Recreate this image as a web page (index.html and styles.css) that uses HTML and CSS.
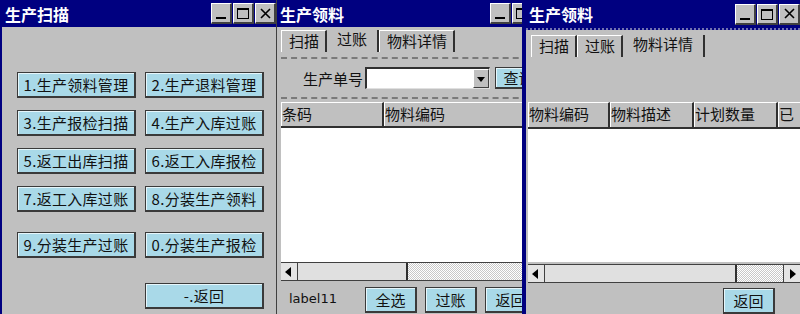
FILE: index.html
```html
<!DOCTYPE html>
<html lang="zh-CN">
<head>
    <meta charset="UTF-8">
    <title>生产扫描</title>
    <link rel="stylesheet" href="styles.css">
</head>
<body>
<div class="desktop">

    <!-- window 1: main menu -->
    <div class="window win-scan">
        <div class="frame">
            <div class="titlebar">
                <span class="title">生产扫描</span>
                <div class="caption-btns">
                    <span class="cbtn"><i class="ico-min"></i></span>
                    <span class="cbtn"><i class="ico-max"></i></span>
                    <span class="cbtn"><svg class="ico-close" width="11" height="11" viewBox="0 0 11 11"><path d="M1 1L10 10M10 1L1 10" stroke="#000" stroke-width="1.6"/></svg></span>
                </div>
            </div>
            <div class="menu-body">
                <div class="menu-row">
                    <button class="btn menu-btn">1.生产领料管理</button>
                    <button class="btn menu-btn">2.生产退料管理</button>
                </div>
                <div class="menu-row">
                    <button class="btn menu-btn">3.生产报检扫描</button>
                    <button class="btn menu-btn">4.生产入库过账</button>
                </div>
                <div class="menu-row">
                    <button class="btn menu-btn">5.返工出库扫描</button>
                    <button class="btn menu-btn">6.返工入库报检</button>
                </div>
                <div class="menu-row">
                    <button class="btn menu-btn">7.返工入库过账</button>
                    <button class="btn menu-btn">8.分装生产领料</button>
                </div>
                <div class="menu-row row-last">
                    <button class="btn menu-btn">9.分装生产过账</button>
                    <button class="btn menu-btn">0.分装生产报检</button>
                </div>
                <div class="menu-row row-back">
                    <button class="btn menu-btn">-.返回</button>
                </div>
            </div>
        </div>
    </div>

    <!-- window 2: posting tab -->
    <div class="window win-pick">
        <div class="frame">
            <div class="titlebar">
                <span class="title">生产领料</span>
                <div class="caption-btns">
                    <span class="cbtn"><i class="ico-min"></i></span>
                    <span class="cbtn"><i class="ico-max"></i></span>
                    <span class="cbtn"><svg class="ico-close" width="11" height="11" viewBox="0 0 11 11"><path d="M1 1L10 10M10 1L1 10" stroke="#000" stroke-width="1.6"/></svg></span>
                </div>
            </div>
            <div class="tabs">
                <span class="tab">扫描</span>
                <span class="tab active">过账</span>
                <span class="tab">物料详情</span>
            </div>
            <div class="query-panel">
                <label class="field-label">生产单号</label>
                <div class="combo">
                    <span class="combo-text"></span>
                    <span class="combo-arrow"></span>
                </div>
                <button class="btn query-btn">查询</button>
            </div>
            <div class="grid-head">
                <span class="col" style="width:103px">条码</span>
                <span class="col" style="width:150px">物料编码</span>
            </div>
            <div class="grid-body"></div>
            <div class="hscroll">
                <span class="sb-arrow left"></span>
                <span class="sb-thumb" style="width:110px"></span>
                <span class="sb-track"></span>
            </div>
            <div class="bottom-bar">
                <span class="status">label11</span>
                <button class="btn act-btn">全选</button>
                <button class="btn act-btn">过账</button>
                <button class="btn act-btn">返回</button>
            </div>
        </div>
    </div>

    <!-- window 3: material details tab -->
    <div class="window win-detail">
        <div class="frame">
            <div class="titlebar dotted">
                <span class="title">生产领料</span>
                <div class="caption-btns">
                    <span class="cbtn"><i class="ico-min"></i></span>
                    <span class="cbtn"><i class="ico-max"></i></span>
                    <span class="cbtn"><svg class="ico-close" width="11" height="11" viewBox="0 0 11 11"><path d="M1 1L10 10M10 1L1 10" stroke="#000" stroke-width="1.6"/></svg></span>
                </div>
            </div>
            <div class="tabs">
                <span class="tab">扫描</span>
                <span class="tab">过账</span>
                <span class="tab active">物料详情</span>
            </div>
            <div class="detail-gap"></div>
            <div class="grid-head tall">
                <span class="col" style="width:82px">物料编码</span>
                <span class="col" style="width:84px">物料描述</span>
                <span class="col" style="width:84px">计划数量</span>
                <span class="col" style="width:30px">已</span>
            </div>
            <div class="grid-body"></div>
            <div class="hscroll">
                <span class="sb-arrow left"></span>
                <span class="sb-thumb" style="width:192px"></span>
                <span class="sb-track"></span>
                <span class="sb-arrow right"></span>
            </div>
            <div class="bottom-bar right">
                <button class="btn act-btn">返回</button>
            </div>
        </div>
    </div>

</div>
</body>
</html>
```

FILE: styles.css
```css
* {
    box-sizing: border-box;
}

body {
    margin: 0;
    font-family: "Noto Sans CJK SC", "DejaVu Sans", sans-serif;
    color: #111;
}

.desktop {
    display: flex;
    width: 800px;
    height: 314px;
    overflow: hidden;
    background-color: #c0c0c0;
}

.window {
    flex: none;
    height: 314px;
    overflow: hidden;
    background-color: #c0c0c0;
}

.frame {
    display: flex;
    flex-direction: column;
    height: 314px;
    background-color: #c0c0c0;
}

.win-scan {
    width: 276px;
    border-left: 2px solid #000080;
}

.win-scan .frame {
    width: 274px;
}

.win-pick {
    width: 246px;
    border-left: 1px solid #404040;
}

.win-pick .frame {
    width: 282px;
}

.win-detail {
    width: 278px;
    border-left: 4px solid #000080;
}

.win-detail .frame {
    width: 274px;
}

/* title bar */

.titlebar {
    display: flex;
    align-items: center;
    justify-content: space-between;
    height: 27px;
    flex: none;
    background-color: #000080;
    color: #fff;
    padding-left: 3px;
}

.titlebar.dotted {
    height: 30px;
    border-bottom: 2px dotted #7070b0;
}

.title {
    font-size: 16px;
    font-weight: bold;
}

.caption-btns {
    display: flex;
    gap: 1px;
}

.win-pick .caption-btns {
    margin-right: 4px;
}

.cbtn {
    display: flex;
    align-items: flex-end;
    justify-content: center;
    width: 21px;
    height: 21px;
    background-color: #c0c0c0;
    border-top: 1px solid #fff;
    border-left: 1px solid #fff;
    border-right: 2px solid #404040;
    border-bottom: 2px solid #404040;
}

.ico-min {
    display: block;
    width: 10px;
    height: 2px;
    margin-bottom: 3px;
    background-color: #000;
}

.ico-max {
    display: block;
    width: 12px;
    height: 11px;
    margin-bottom: 3px;
    border: 1px solid #000;
    border-top-width: 2px;
}

.ico-close {
    display: block;
    align-self: center;
}

/* buttons */

.btn {
    font-family: inherit;
    font-size: 15px;
    color: #111;
    background-color: #a9d9e8;
    border: 1px solid #3a3a3a;
    border-right-width: 2px;
    border-bottom-width: 2px;
    box-shadow: inset 1px 1px 0 #e6f6fb;
    padding: 0;
    height: 26px;
    line-height: 22px;
    cursor: pointer;
}

/* window 1 menu */

.menu-body {
    display: flex;
    flex-direction: column;
    gap: 12px;
    padding: 45px 0 0 15px;
}

.menu-row {
    display: flex;
    gap: 9px;
}

.menu-btn {
    width: 119px;
    text-align: center;
    letter-spacing: 0.3px;
}

.row-last {
    margin-top: 8px;
}

.row-back {
    margin-top: 13px;
    padding-left: 128px;
}

/* tabs */

.tabs {
    display: flex;
    height: 22px;
    margin: 3px 0 0 4px;
    flex: none;
}

.win-detail .tabs {
    margin: 5px 0 0 5px;
}

.tab {
    font-size: 15px;
    line-height: 20px;
    padding: 0 6px 0 7px;
    border-top: 1px solid #fff;
    border-left: 1px solid #fff;
    border-right: 2px solid #303030;
}

.tab.active {
    padding: 0 10px;
    border-top: none;
    border-left: none;
    line-height: 18px;
}

/* window 2 query form */

.query-panel {
    display: flex;
    align-items: center;
    margin: 5px 0 0 4px;
    padding: 8px 0 8px 22px;
    border-top: 2px dashed #7a7a7a;
    border-bottom: 2px dashed #7a7a7a;
    flex: none;
}

.field-label {
    font-size: 15px;
    width: 62px;
}

.combo {
    display: flex;
    width: 125px;
    height: 22px;
    background-color: #fff;
    border-top: 2px solid #303030;
    border-left: 2px solid #303030;
    border-right: 1px solid #e0e0e0;
    border-bottom: 1px solid #e0e0e0;
}

.combo-text {
    flex: 1;
}

.combo-arrow {
    position: relative;
    width: 16px;
    background-color: #c0c0c0;
    border-top: 1px solid #fff;
    border-left: 1px solid #fff;
    border-right: 1px solid #404040;
    border-bottom: 1px solid #404040;
}

.combo-arrow::after {
    content: "";
    position: absolute;
    left: 3px;
    top: 7px;
    border-left: 4px solid transparent;
    border-right: 4px solid transparent;
    border-top: 5px solid #000;
}

.query-btn {
    margin-left: 5px;
    width: 48px;
    height: 22px;
    line-height: 18px;
}

/* grid */

.grid-head {
    display: flex;
    height: 26px;
    margin: 3px 0 0 4px;
    border-bottom: 2px solid #303030;
    flex: none;
}

.win-detail .grid-head {
    margin: 0 0 0 2px;
}

.grid-head.tall {
    height: 27px;
}

.col {
    flex: none;
    font-size: 15px;
    line-height: 22px;
    border-top: 1px solid #fff;
    border-left: 1px solid #fff;
    border-right: 2px solid #303030;
    overflow: hidden;
    white-space: nowrap;
}

.grid-body {
    flex: 1;
    margin-left: 4px;
    background-color: #fff;
}

.win-detail .grid-body {
    margin-left: 2px;
}

.detail-gap {
    height: 45px;
    flex: none;
}

/* scrollbar */

.hscroll {
    display: flex;
    height: 19px;
    margin-left: 4px;
    border-top: 1px solid #404040;
    border-bottom: 1px solid #404040;
    flex: none;
}

.win-detail .hscroll {
    margin: 2px 0 0 2px;
}

.sb-arrow {
    position: relative;
    width: 17px;
    flex: none;
    background-color: #e4e4e4;
    border-right: 1px solid #404040;
}

.sb-arrow.right {
    border-right: none;
    border-left: 1px solid #404040;
}

.sb-arrow.left::after {
    content: "";
    position: absolute;
    left: 4px;
    top: 4px;
    border-top: 5px solid transparent;
    border-bottom: 5px solid transparent;
    border-right: 6px solid #000;
}

.sb-arrow.right::after {
    content: "";
    position: absolute;
    left: 6px;
    top: 4px;
    border-top: 5px solid transparent;
    border-bottom: 5px solid transparent;
    border-left: 6px solid #000;
}

.sb-thumb {
    flex: none;
    background-color: #e0e0e0;
    border-right: 2px solid #303030;
}

.sb-track {
    flex: 1;
    background-color: #fff;
    background-image: repeating-conic-gradient(#c8c8c8 0 25%, #fff 0 50%);
    background-size: 2px 2px;
}

/* bottom bar */

.bottom-bar {
    display: flex;
    align-items: flex-start;
    height: 33px;
    padding: 6px 0 0 12px;
    flex: none;
}

.bottom-bar.right {
    justify-content: flex-end;
    padding-right: 17px;
    height: 31px;
    padding-top: 5px;
}

.status {
    font-family: "DejaVu Sans", sans-serif;
    font-size: 13px;
    line-height: 24px;
    width: 76px;
}

.act-btn {
    width: 52px;
    margin-right: 8px;
}
```
